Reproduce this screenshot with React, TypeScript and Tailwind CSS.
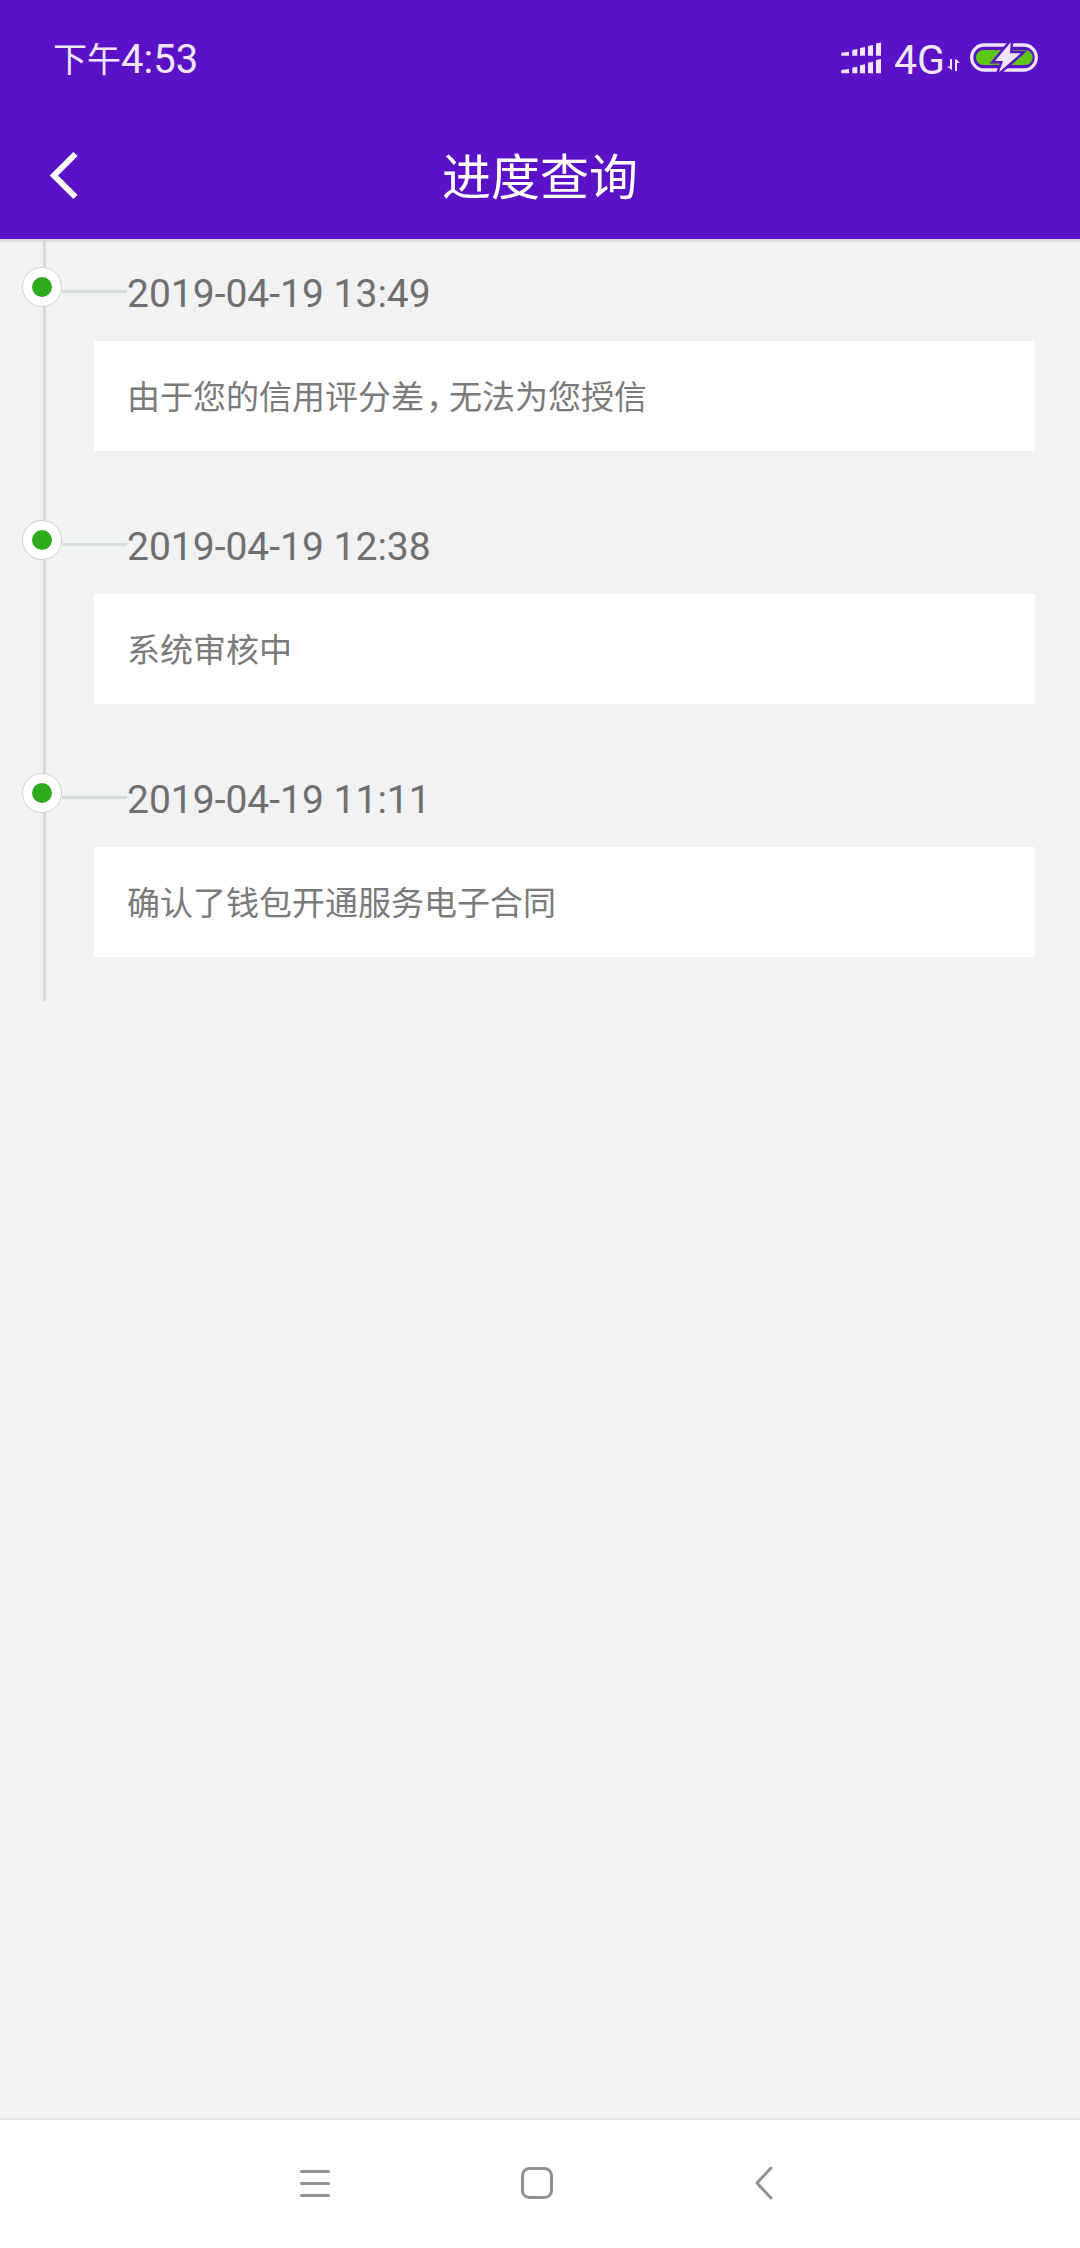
import React from "react";

const items = [
  {
    time: "2019-04-19 13:49",
    text: (
      <>
        由于您的信用评分差<span className="ml-[2px] tracking-[-10px]">，</span>无法为您授信
      </>
    ),
  },
  { time: "2019-04-19 12:38", text: "系统审核中" },
  { time: "2019-04-19 11:11", text: "确认了钱包开通服务电子合同" },
];

function Signal() {
  const xs = [[0.3, 8], [11.3, 16.3], [19, 24], [27, 32], [35, 40]];
  const top = [9.7, 7, 5, 3, 0.5];
  const bottom = [27, 24.7, 22.3, 19.7, 17];
  return (
    <svg width="40" height="36" viewBox="0 0 40 36" fill="#efe6fb">
      {xs.map(([a, b], i) => (
        <React.Fragment key={i}>
          <polygon points={`${a},${top[i] + 1} ${b},${top[i]} ${b},13.7 ${a},13.7`} />
          <polygon points={`${a},${bottom[i] + 1} ${b},${bottom[i]} ${b},31.3 ${a},31.3`} />
        </React.Fragment>
      ))}
    </svg>
  );
}

function DataArrows() {
  return (
    <svg width="13" height="12" viewBox="0 0 13 12" fill="#efe6fb">
      <path d="M3 0h2v11L0 7.5h3z" />
      <path d="M8 12h2V4h3L9 0 8 1z" />
    </svg>
  );
}

function Battery() {
  return (
    <svg width="68" height="36" viewBox="0 0 68 36">
      <rect x="1.7" y="3" width="64.6" height="25" rx="12.5" fill="none" stroke="#efe6fb" strokeWidth="3.3" />
      <rect x="6" y="8" width="56.7" height="15" rx="7.5" fill="#5dc514" />
      <path
        d="M40.7 0.3 L25 19 H33 L29 30.3 L50.7 11.3 H40 Z"
        fill="#efe6fb"
        stroke="#5b12c6"
        strokeWidth="5"
        strokeLinejoin="miter"
        paintOrder="stroke"
      />
    </svg>
  );
}

export default function App() {
  return (
    <div className="flex h-[2248px] w-[1080px] flex-col bg-[#f1f2f4] font-['Roboto','Noto_Sans_CJK_SC',sans-serif]">
      <header className="h-[242px] shrink-0 border-b-[3px] border-[#dcdce0] bg-[#5b12c6]">
        <div className="flex h-[120px] items-center justify-between pl-[53px] pr-[42px]">
          <div className="flex items-center leading-none text-[#efe6fb]">
            <span className="text-[34px]">下午</span>
            <span className="text-[40px]">4:53</span>
          </div>
          <div className="flex items-center">
            <Signal />
            <span className="ml-[13px] text-[41px] leading-none text-[#efe6fb]">4G</span>
            <span className="ml-[2px] mt-[10px] flex"><DataArrows /></span>
            <span className="ml-[10px] flex"><Battery /></span>
          </div>
        </div>
        <div className="relative flex h-[119px] items-center justify-center pb-[2px]">
          <svg className="absolute left-[49px] top-[30px]" width="32" height="52" viewBox="0 0 32 52" fill="none">
            <path d="M26.5 4 L5 25.5 L26.5 47" stroke="#fff" strokeWidth="6" />
          </svg>
          <h1 className="text-[49px] font-normal leading-none text-white">进度查询</h1>
        </div>
      </header>

      <main className="min-h-0 flex-1">
        <div className="relative pb-[44px] pl-[22px] pr-[45px] pt-[25px]">
          <div className="absolute bottom-0 left-[43px] top-0 w-[3px] bg-[#d5dcdc]" />
          <div className="relative flex flex-col gap-[69px]">
            {items.map((it) => (
              <section key={it.time}>
                <div className="flex h-[74px] items-start">
                  <div className="flex h-[40px] w-[40px] shrink-0 items-center justify-center rounded-full border-[1.5px] border-[#d0d0d0] bg-white">
                    <div className="h-[20px] w-[20px] rounded-full bg-[#2dab1d]" />
                  </div>
                  <div className="mt-[23px] h-[3px] w-[65px] shrink-0 bg-[#d5dcdc]" />
                  <div className="mt-[4px] text-[39px] leading-[46px] text-[#6f6f6f]">{it.time}</div>
                </div>
                <div className="ml-[72px] flex h-[110px] items-center bg-white pl-[33px] pt-[2px] text-[33px] leading-none text-[#7a7a7a]">
                  <span>{it.text}</span>
                </div>
              </section>
            ))}
          </div>
        </div>
      </main>

      <nav className="flex h-[130px] shrink-0 items-center border-t-2 border-[#e6e6e6] bg-white pb-[2px] pl-[300px]">
        <svg width="30" height="27" viewBox="0 0 30 27" fill="none" stroke="#919191" strokeWidth="3" strokeLinecap="round">
          <path d="M1.5 1.5H28.5M1.5 13.5H28.5M1.5 25.5H28.5" />
        </svg>
        <svg className="ml-[191px]" width="32" height="32" viewBox="0 0 32 32" fill="none" stroke="#919191" strokeWidth="3">
          <rect x="1.5" y="1.5" width="29" height="29" rx="7" />
        </svg>
        <svg className="ml-[202px]" width="18" height="34" viewBox="0 0 18 34" fill="none" stroke="#919191" strokeWidth="3" strokeLinecap="round" strokeLinejoin="round">
          <path d="M16 2 L2 17 L16 32" />
        </svg>
      </nav>
    </div>
  );
}
